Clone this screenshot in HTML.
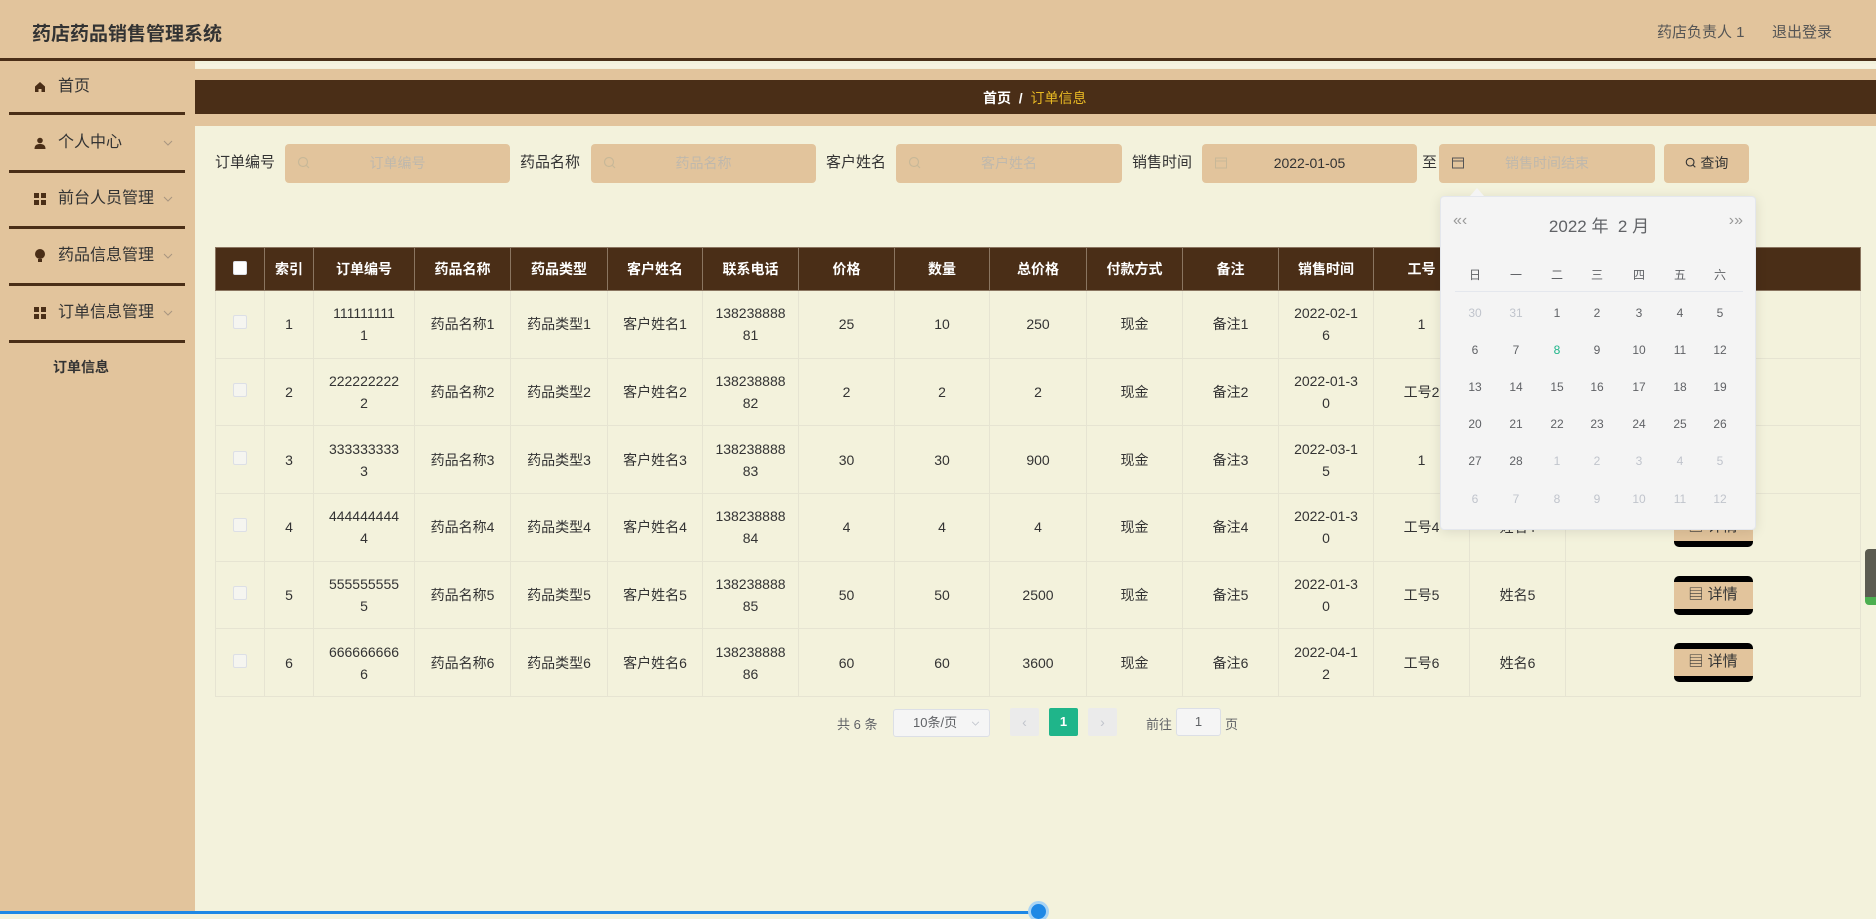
<!DOCTYPE html>
<html><head><meta charset="utf-8"><style>
*{margin:0;padding:0;box-sizing:border-box}
body{width:1876px;height:914px;overflow:hidden;background:#f3f2dc;font-family:"Liberation Sans","Noto Sans CJK SC",sans-serif;color:#333;position:relative}
.a{position:absolute}
.hdr{left:0;top:0;width:1876px;height:58px;background:#e2c49c}
.hline{left:0;top:58px;width:1876px;height:3px;background:#4a2e17}
.side{left:0;top:61px;width:195px;height:853px;background:#e2c49c}
.sep{left:9px;width:176px;height:3px;background:#4a2e17}
.mi{left:34px;font-size:16px;color:#333;line-height:20px;display:flex;align-items:center}
.mi svg{margin-right:12px}
.chev{left:163px}
.lbl{font-size:15px;color:#333;top:153px;line-height:20px}
.inp{top:144px;height:39px;background:#e2c49c;border-radius:4px;font-size:14px;color:#bfb8ac;text-align:center;line-height:39px}
.inp .ic{position:absolute;left:12px;top:12px}
table{border-collapse:collapse;position:absolute;left:215px;top:247px;table-layout:fixed;width:1645px}
th{background:#4a2e17;color:#fff;font-size:14px;font-weight:bold;height:43px;border:1px solid #8a7560;text-align:center}
td{height:67.7px;border:1px solid #e6e4d2;text-align:center;font-size:14px;color:#333;line-height:22px}
.cb{display:inline-block;width:14px;height:14px;border:1px solid #dcdfe6;border-radius:2px;background:#f5f5f0}
.btn{display:inline-block;width:79px;height:39px;background:#e2c49c;border-top:6px solid #000;border-bottom:6px solid #000;border-radius:5px;font-size:15px;line-height:26px;color:#333}
.cal{left:1440px;top:196px;width:316px;height:334px;background:#f4f4f4;border:1px solid #e4e7ed;border-radius:4px;box-shadow:0 2px 12px rgba(0,0,0,.1)}
.d{position:absolute;width:30px;text-align:center;font-size:12px;color:#606266}
</style></head><body>
<div class="a hdr"></div>
<div class="a" style="left:32px;top:19px;font-size:19px;font-weight:bold;color:#333">药店药品销售管理系统</div>
<div class="a" style="left:1657px;top:21px;font-size:15px;color:#555">药店负责人 1</div>
<div class="a" style="left:1772px;top:21px;font-size:15px;color:#555">退出登录</div>
<div class="a hline"></div>
<div class="a side"></div>
<div class="a sep" style="top:112px"></div>
<div class="a sep" style="top:170px"></div>
<div class="a sep" style="top:226px"></div>
<div class="a sep" style="top:283px"></div>
<div class="a sep" style="top:340px"></div>
<div class="a mi" style="top:77px"><svg width="12" height="12" viewBox="0 0 12 12"><path d="M6 1L1 5.5V11H4.5V8H7.5V11H11V5.5Z" fill="#4a2e17"/></svg>首页</div>
<div class="a mi" style="top:133px"><svg width="12" height="12" viewBox="0 0 12 12"><circle cx="6" cy="3.5" r="2.8" fill="#4a2e17"/><path d="M0.5 12C0.5 8 3 7 6 7S11.5 8 11.5 12Z" fill="#4a2e17"/></svg>个人中心</div>
<div class="a mi" style="top:189px"><svg width="12" height="12" viewBox="0 0 12 12" fill="#4a2e17"><rect x="0" y="0" width="5" height="5"/><rect x="7" y="0" width="5" height="5"/><rect x="0" y="7" width="5" height="5"/><rect x="7" y="7" width="5" height="5"/></svg>前台人员管理</div>
<div class="a mi" style="top:246px"><svg width="12" height="14" viewBox="0 0 12 14" fill="#4a2e17"><circle cx="6" cy="5" r="5"/><rect x="4" y="10" width="4" height="3"/></svg>药品信息管理</div>
<div class="a mi" style="top:303px"><svg width="12" height="12" viewBox="0 0 12 12" fill="#4a2e17"><rect x="0" y="0" width="5" height="5"/><rect x="7" y="0" width="5" height="5"/><rect x="0" y="7" width="5" height="5"/><rect x="7" y="7" width="5" height="5"/></svg>订单信息管理</div>
<svg class="a chev" style="top:140px" width="10" height="6" viewBox="0 0 10 6"><path d="M1 1L5 5L9 1" stroke="#a89580" fill="none"/></svg>
<svg class="a chev" style="top:196px" width="10" height="6" viewBox="0 0 10 6"><path d="M1 1L5 5L9 1" stroke="#a89580" fill="none"/></svg>
<svg class="a chev" style="top:253px" width="10" height="6" viewBox="0 0 10 6"><path d="M1 1L5 5L9 1" stroke="#a89580" fill="none"/></svg>
<svg class="a chev" style="top:310px" width="10" height="6" viewBox="0 0 10 6"><path d="M1 1L5 5L9 1" stroke="#a89580" fill="none"/></svg>
<div class="a" style="left:53px;top:357px;font-size:14px;font-weight:bold;color:#333">订单信息</div>

<div class="a" style="left:195px;top:64px;width:1681px;height:4px;background:#f7f3e0"></div>
<div class="a" style="left:195px;top:69px;width:1681px;height:57px;background:#e2c49c"></div>
<div class="a" style="left:195px;top:80px;width:1681px;height:34px;background:#4a2e17"></div>
<div class="a" style="left:983px;top:88px;font-size:14px;font-weight:bold;color:#fff">首页 &nbsp;/&nbsp; <span style="color:#e8b923;font-weight:normal">订单信息</span></div>

<div class="a lbl" style="left:215px">订单编号</div>
<div class="a inp" style="left:285px;width:225px"><svg class="ic" width="14" height="14" viewBox="0 0 14 14"><circle cx="6" cy="6" r="4.5" stroke="#c8b898" fill="none" stroke-width="1.2"/><path d="M9.5 9.5L12 12" stroke="#c8b898" stroke-width="1.2"/></svg>订单编号</div>
<div class="a lbl" style="left:520px">药品名称</div>
<div class="a inp" style="left:591px;width:225px"><svg class="ic" width="14" height="14" viewBox="0 0 14 14"><circle cx="6" cy="6" r="4.5" stroke="#c8b898" fill="none" stroke-width="1.2"/><path d="M9.5 9.5L12 12" stroke="#c8b898" stroke-width="1.2"/></svg>药品名称</div>
<div class="a lbl" style="left:826px">客户姓名</div>
<div class="a inp" style="left:896px;width:226px"><svg class="ic" width="14" height="14" viewBox="0 0 14 14"><circle cx="6" cy="6" r="4.5" stroke="#c8b898" fill="none" stroke-width="1.2"/><path d="M9.5 9.5L12 12" stroke="#c8b898" stroke-width="1.2"/></svg>客户姓名</div>
<div class="a lbl" style="left:1132px">销售时间</div>
<div class="a inp" style="left:1202px;width:215px;color:#333"><svg class="ic" width="14" height="14" viewBox="0 0 14 14"><rect x="1.5" y="2" width="11" height="10" stroke="#c8b898" fill="none"/><path d="M1.5 5H12.5" stroke="#c8b898"/></svg>2022-01-05</div>
<div class="a lbl" style="left:1422px">至</div>
<div class="a inp" style="left:1439px;width:216px"><svg class="ic" width="14" height="14" viewBox="0 0 14 14"><rect x="1.5" y="2" width="11" height="10" stroke="#555" fill="none"/><path d="M1.5 5H12.5" stroke="#555"/></svg>销售时间结束</div>
<div class="a inp" style="left:1664px;width:85px;color:#333"><svg width="12" height="12" viewBox="0 0 14 14" style="vertical-align:-1px"><circle cx="6" cy="6" r="4.5" stroke="#333" fill="none" stroke-width="1.3"/><path d="M9.5 9.5L12 12" stroke="#333" stroke-width="1.3"/></svg> 查询</div>

<table>
<colgroup><col style="width:49px"><col style="width:49px"><col style="width:101px"><col style="width:96px"><col style="width:97px"><col style="width:95px"><col style="width:96px"><col style="width:96px"><col style="width:95px"><col style="width:97px"><col style="width:96px"><col style="width:96px"><col style="width:95px"><col style="width:96px"><col style="width:96px"><col style="width:295px"></colgroup>
<tr><th><span class="cb" style="background:#fff"></span></th><th>索引</th><th>订单编号</th><th>药品名称</th><th>药品类型</th><th>客户姓名</th><th>联系电话</th><th>价格</th><th>数量</th><th>总价格</th><th>付款方式</th><th>备注</th><th>销售时间</th><th>工号</th><th>姓名</th><th>操作</th></tr>
<tr><td><span class="cb"></span></td><td>1</td><td>111111111<br>1</td><td>药品名称1</td><td>药品类型1</td><td>客户姓名1</td><td>138238888<br>81</td><td>25</td><td>10</td><td>250</td><td>现金</td><td>备注1</td><td>2022-02-1<br>6</td><td>1</td><td>姓名1</td><td><span class="btn">▤ 详情</span></td></tr>
<tr><td><span class="cb"></span></td><td>2</td><td>222222222<br>2</td><td>药品名称2</td><td>药品类型2</td><td>客户姓名2</td><td>138238888<br>82</td><td>2</td><td>2</td><td>2</td><td>现金</td><td>备注2</td><td>2022-01-3<br>0</td><td>工号2</td><td>姓名2</td><td><span class="btn">▤ 详情</span></td></tr>
<tr><td><span class="cb"></span></td><td>3</td><td>333333333<br>3</td><td>药品名称3</td><td>药品类型3</td><td>客户姓名3</td><td>138238888<br>83</td><td>30</td><td>30</td><td>900</td><td>现金</td><td>备注3</td><td>2022-03-1<br>5</td><td>1</td><td>姓名3</td><td><span class="btn">▤ 详情</span></td></tr>
<tr><td><span class="cb"></span></td><td>4</td><td>444444444<br>4</td><td>药品名称4</td><td>药品类型4</td><td>客户姓名4</td><td>138238888<br>84</td><td>4</td><td>4</td><td>4</td><td>现金</td><td>备注4</td><td>2022-01-3<br>0</td><td>工号4</td><td>姓名4</td><td><span class="btn">▤ 详情</span></td></tr>
<tr><td><span class="cb"></span></td><td>5</td><td>555555555<br>5</td><td>药品名称5</td><td>药品类型5</td><td>客户姓名5</td><td>138238888<br>85</td><td>50</td><td>50</td><td>2500</td><td>现金</td><td>备注5</td><td>2022-01-3<br>0</td><td>工号5</td><td>姓名5</td><td><span class="btn">▤ 详情</span></td></tr>
<tr><td><span class="cb"></span></td><td>6</td><td>666666666<br>6</td><td>药品名称6</td><td>药品类型6</td><td>客户姓名6</td><td>138238888<br>86</td><td>60</td><td>60</td><td>3600</td><td>现金</td><td>备注6</td><td>2022-04-1<br>2</td><td>工号6</td><td>姓名6</td><td><span class="btn">▤ 详情</span></td></tr>
</table>

<div class="a" style="left:837px;top:714px;font-size:13px;color:#606266">共 6 条</div>
<div class="a" style="left:893px;top:709px;width:97px;height:28px;border:1px solid #dcdfe6;border-radius:3px;background:#f5f5f5;font-size:13px;color:#606266;line-height:26px;padding-left:19px">10条/页<svg style="position:absolute;right:9px;top:11px" width="9" height="5" viewBox="0 0 10 6"><path d="M1 1L5 5L9 1" stroke="#c0c4cc" fill="none"/></svg></div>
<div class="a" style="left:1010px;top:708px;width:29px;height:28px;background:#ebebeb;border-radius:2px;color:#c0c4cc;text-align:center;line-height:28px;font-size:14px">‹</div>
<div class="a" style="left:1049px;top:708px;width:29px;height:28px;background:#1fb58a;border-radius:2px;color:#fff;text-align:center;line-height:28px;font-size:13px;font-weight:bold">1</div>
<div class="a" style="left:1088px;top:708px;width:29px;height:28px;background:#ebebeb;border-radius:2px;color:#c0c4cc;text-align:center;line-height:28px;font-size:14px">›</div>
<div class="a" style="left:1146px;top:714px;font-size:13px;color:#606266">前往</div>
<div class="a" style="left:1176px;top:708px;width:45px;height:28px;border:1px solid #dcdfe6;border-radius:3px;background:#f5f5f5;text-align:center;line-height:26px;font-size:13px;color:#606266">1</div>
<div class="a" style="left:1225px;top:714px;font-size:13px;color:#606266">页</div>

<div class="a cal">
<div class="a" style="left:12px;top:15px;font-size:16px;color:#999">«‹</div>
<div class="a" style="left:0;width:316px;top:15px;text-align:center;font-size:17px;color:#606266">2022 年 &nbsp;2 月</div>
<div class="a" style="right:12px;top:15px;font-size:16px;color:#999">›»</div>
<div class="a" style="left:14px;top:94px;width:288px;height:1px;background:#e4e7ed"></div>
</div>
<div class="a" style="left:1470px;top:188px;width:0;height:0;border-left:7px solid transparent;border-right:7px solid transparent;border-bottom:8px solid #f4f4f4"></div>
<div id="days"></div>
<div class="a" style="left:1865px;top:549px;width:11px;height:56px;background:#5b5b50;border-radius:4px 0 0 4px;border-bottom:8px solid #4caf50"></div>
<div class="a" style="left:0;top:911px;width:1038px;height:3px;background:#1e88e5"></div>
<div class="a" style="left:1031px;top:904px;width:15px;height:15px;border-radius:50%;background:#1e88e5;box-shadow:0 0 0 3px #a8d4f5"></div>
<script>
var xs=[1460,1501,1542,1582,1624,1665,1705];
var ys=[266,303,340,377,414,451,489];
var h='';
var wk=['日','一','二','三','四','五','六'];
for(var i=0;i<7;i++)h+='<div class="d" style="left:'+xs[i]+'px;top:'+ys[0]+'px;color:#606266">'+wk[i]+'</div>';
var days=[[30,1],[31,1]];for(var i=1;i<=28;i++)days.push([i,0]);for(var i=1;i<=12;i++)days.push([i,1]);
for(var k=0;k<42;k++){var r=Math.floor(k/7),c=k%7;var col=days[k][1]?'#c0c4cc':(days[k][0]==8&&r==1?'#1fb58a':'#606266');
h+='<div class="d" style="left:'+xs[c]+'px;top:'+(ys[r+1]+3)+'px;color:'+col+'">'+days[k][0]+'</div>';}
document.getElementById('days').innerHTML=h;
</script>
</body></html>
